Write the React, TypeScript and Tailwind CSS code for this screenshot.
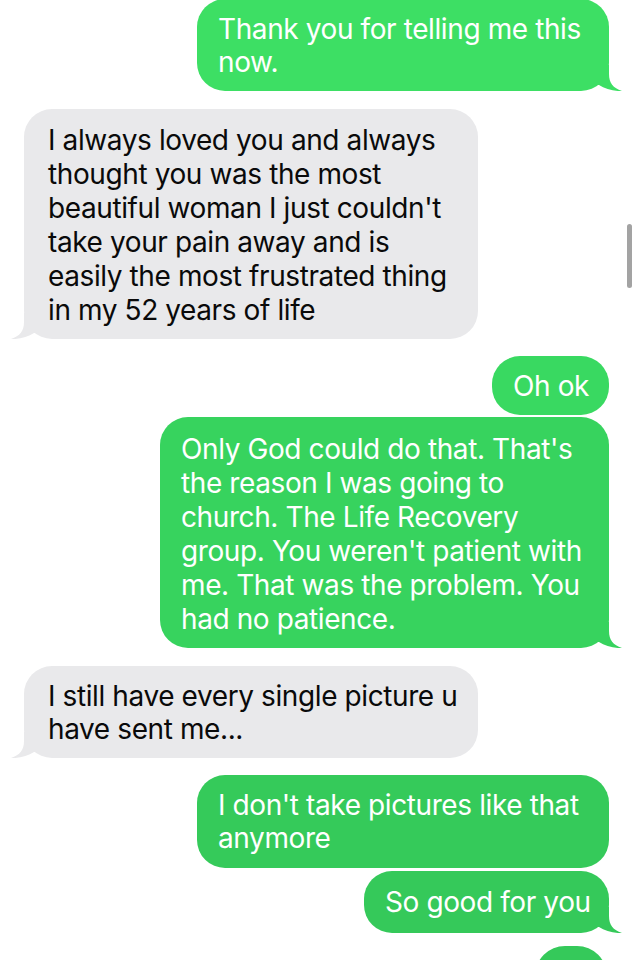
import React from "react";

function Tail({ side, color }: { side: "left" | "right"; color: string }) {
  return (
    <svg
      width="26"
      height="26"
      viewBox="0 0 26 26"
      className={
        side === "right"
          ? "absolute bottom-0 right-[-13px]"
          : "absolute bottom-0 left-[-13px] -scale-x-100"
      }
    >
      <path
        d="M0 0 H13 V9 C13 18 17 23 26 26 C18 26.5 9 24 3 20 L0 20 Z"
        fill={color}
      />
    </svg>
  );
}

function Sent({
  lines,
  w,
  color,
  tail = true,
  cls = "",
}: {
  lines: string[];
  w: string;
  color: string;
  tail?: boolean;
  cls?: string;
}) {
  return (
    <div className={"flex justify-end pr-[28px] " + cls}>
      <div
        className={"relative rounded-[28px] px-[21px] pt-[14px] pb-[12px] text-white " + w}
        style={{ backgroundColor: color }}
      >
        {lines.map((l, i) => (
          <div key={i} className="whitespace-nowrap leading-[33px]">
            {l}
          </div>
        ))}
        {tail && <Tail side="right" color={color} />}
      </div>
    </div>
  );
}

function Received({ lines, cls = "" }: { lines: string[]; cls?: string }) {
  return (
    <div className={"flex justify-start pl-[24px] " + cls}>
      <div className="relative w-[454px] rounded-[28px] bg-[#e9e9eb] px-[24px] pt-[14px] pb-[12px] text-[#0a0a0a]">
        {lines.map((l, i) => (
          <div key={i} className="whitespace-nowrap leading-[34px]">
            {l}
          </div>
        ))}
        <Tail side="left" color="#e9e9eb" />
      </div>
    </div>
  );
}

export default function App() {
  return (
    <div
      className="relative h-[960px] w-[637px] overflow-hidden bg-white text-[28px] tracking-[-0.4px]"
      style={{ fontFamily: "Inter, 'Liberation Sans', sans-serif" }}
    >
      <div className="flex flex-col">
        <Sent
          cls="mt-[-1px]"
          w="w-[412px]"
          color="#3ddf64"
          lines={["Thank you for telling me this", "now."]}
        />
        <Received
          cls="mt-[18px]"
          lines={[
            "I always loved you and always",
            "thought you was the most",
            "beautiful woman I just couldn't",
            "take your pain away and is",
            "easily the most frustrated thing",
            "in my 52 years of life",
          ]}
        />
        <Sent
          cls="mt-[17px]"
          w="w-[117px]"
          color="#39d961"
          tail={false}
          lines={["Oh ok"]}
        />
        <div className="mt-[2px] flex justify-end pr-[28px]">
          <div className="relative w-[449px] rounded-[28px] bg-[#37d35e] px-[21px] pt-[15px] pb-[12px] text-white">
            {[
              "Only God could do that. That's",
              "the reason I was going to",
              "church. The Life Recovery",
              "group. You weren't patient with",
              "me. That was the problem. You",
              "had no patience.",
            ].map((l, i) => (
              <div key={i} className="whitespace-nowrap leading-[34px]">
                {l}
              </div>
            ))}
            <Tail side="right" color="#37d35e" />
          </div>
        </div>
        <div className="mt-[18px] flex justify-start pl-[24px]">
          <div className="relative w-[454px] rounded-[28px] bg-[#e9e9eb] px-[24px] pt-[14px] pb-[12px] text-[#0a0a0a]">
            <div className="whitespace-nowrap leading-[33px]">
              I still have every single picture u
            </div>
            <div className="whitespace-nowrap leading-[33px]">have sent me...</div>
            <Tail side="left" color="#e9e9eb" />
          </div>
        </div>
        <div className="mt-[17px] flex justify-end pr-[28px]">
          <div className="relative w-[412px] rounded-[28px] bg-[#35ca5a] px-[21px] pt-[14px] pb-[13px] text-white">
            <div className="whitespace-nowrap leading-[33px]">
              I don't take pictures like that
            </div>
            <div className="whitespace-nowrap leading-[33px]">anymore</div>
          </div>
        </div>
        <div className="mt-[3px] flex justify-end pr-[28px]">
          <div className="relative w-[245px] rounded-[28px] bg-[#35c95a] px-[21px] pt-[15px] pb-[14px] text-white">
            <div className="whitespace-nowrap leading-[33px]">So good for you</div>
            <Tail side="right" color="#35c95a" />
          </div>
        </div>
        <div className="mt-[13px] flex justify-end pr-[30px]">
          <div className="h-[62px] w-[72px] rounded-[30px] bg-[#35c95a]" />
        </div>
      </div>
      <div className="absolute right-[5px] top-[224px] h-[64px] w-[5px] rounded-full bg-[#a3a3a3]" />
    </div>
  );
}
